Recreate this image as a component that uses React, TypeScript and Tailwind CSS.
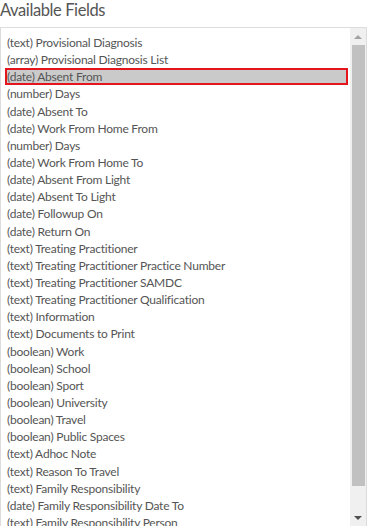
import React from "react";

const fields: string[] = [
  "(text) Provisional Diagnosis",
  "(array) Provisional Diagnosis List",
  "(date) Absent From",
  "(number) Days",
  "(date) Absent To",
  "(date) Work From Home From",
  "(number) Days",
  "(date) Work From Home To",
  "(date) Absent From Light",
  "(date) Absent To Light",
  "(date) Followup On",
  "(date) Return On",
  "(text) Treating Practitioner",
  "(text) Treating Practitioner Practice Number",
  "(text) Treating Practitioner SAMDC",
  "(text) Treating Practitioner Qualification",
  "(text) Information",
  "(text) Documents to Print",
  "(boolean) Work",
  "(boolean) School",
  "(boolean) Sport",
  "(boolean) University",
  "(boolean) Travel",
  "(boolean) Public Spaces",
  "(text) Adhoc Note",
  "(text) Reason To Travel",
  "(text) Family Responsibility",
  "(date) Family Responsibility Date To",
  "(text) Family Responsibility Person",
  "(text) Family Responsibility Relationship",
];

export default function App() {
  return (
    <div
      className="w-[368px] h-[526px] overflow-hidden bg-white text-[#555]"
      style={{ fontFamily: "Lato, 'Open Sans', sans-serif" }}
    >
      <div className="h-[27px] text-[16.5px] leading-[20px] tracking-[-0.4px] text-[#555]">Available Fields</div>
      <div className="flex h-[500px] w-[367px] border border-[#dcdcdc] overflow-hidden">
        <div className="flex-1 pt-[6px] pl-[4px] pr-[2px] overflow-hidden">
          {fields.map((f, i) => (
            <div
              key={i}
              className={
                "text-[12px] leading-[17.14px] tracking-[-0.22px] pl-[2px] whitespace-nowrap " +
                (i === 2 ? "bg-[#cacaca] shadow-[inset_0_0_0_2px_#e5151d]" : "")
              }
            >
              {f}
            </div>
          ))}
        </div>
        <div className="w-[16px] bg-[#f0f0f0] flex flex-col items-center">
          <div className="h-[17px] w-full flex items-center justify-center">
            <div className="w-0 h-0 border-l-[4px] border-r-[4px] border-b-[4px] border-l-transparent border-r-transparent border-b-[#a3a3a3]" />
          </div>
          <div className="w-[13px] h-[441px] bg-[#c1c1c1]" />
          <div className="flex-1" />
          <div className="h-[17px] w-full flex items-center justify-center">
            <div className="w-0 h-0 border-l-[4px] border-r-[4px] border-t-[4px] border-l-transparent border-r-transparent border-t-[#505050]" />
          </div>
        </div>
      </div>
    </div>
  );
}
